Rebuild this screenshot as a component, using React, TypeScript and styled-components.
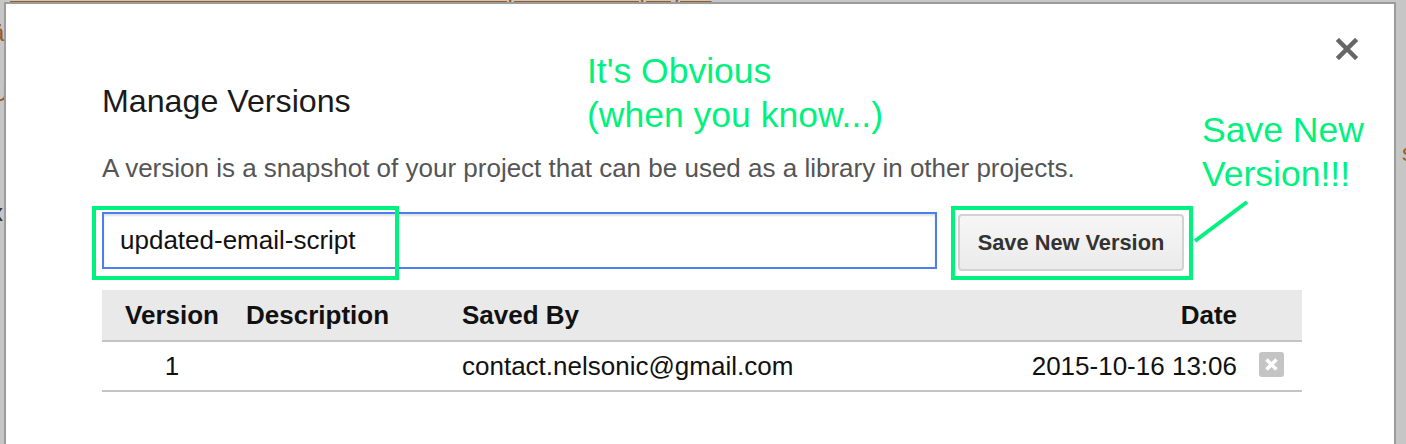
import React from 'react';
import styled, { createGlobalStyle } from 'styled-components';

const GlobalStyle = createGlobalStyle`
  html, body {
    margin: 0;
    padding: 0;
    background: #c6c6c6;
  }
  body {
    font-family: 'Liberation Sans', Arial, sans-serif;
  }
`;

const ANNOTATION = '#00f27e';

const Page = styled.div`
  position: relative;
  width: 1406px;
  height: 444px;
  overflow: hidden;
  background: #c6c6c6;
`;

// the page behind the modal, only slivers of it show at the edges
const Backdrop = styled.div`
  display: flex;
  flex-direction: column;
  font-size: 24px;
  color: #9b5a20;
  white-space: nowrap;
`;

const TopStrip = styled.div`
  height: 3px;
  overflow: hidden;
  padding-left: 10px;
`;

const TopText = styled.div`
  margin-top: -21px;
  line-height: 24px;
  text-decoration: underline;
`;

const EdgeLine = styled.div`
  display: flex;
  justify-content: space-between;
  height: 60px;
  line-height: 60px;
  margin-left: -9px;
  margin-right: -8px;
`;

const EdgeChar = styled.span<{ $dark?: boolean }>`
  color: ${(p) => (p.$dark ? '#333' : '#9b5a20')};
`;

const Dialog = styled.div`
  position: absolute;
  left: 4px;
  top: 2px;
  width: 1392px;
  height: 460px;
  background: #fff;
  border: 2px solid #9c9c9c;
  padding: 81px 0 0 96px;
  box-sizing: border-box;
`;

const Body = styled.div`
  width: 1200px;
  display: flex;
  flex-direction: column;
`;

const CloseButton = styled.button`
  position: absolute;
  left: 1330px;
  top: 34px;
  width: 22px;
  height: 22px;
  padding: 0;
  border: none;
  background: none;
  cursor: pointer;
`;

const Title = styled.h2`
  margin: 0;
  font-size: 32.2px;
  line-height: 32px;
  font-weight: 400;
  color: #1a1a1a;
`;

const Description = styled.p`
  margin: 38px 0 0;
  font-size: 26px;
  line-height: 26px;
  color: #555;
`;

const FormRow = styled.div`
  display: flex;
  align-items: flex-start;
  gap: 21px;
  margin-top: 31px;
`;

const VersionInput = styled.input`
  width: 835px;
  height: 57px;
  box-sizing: border-box;
  border: 2px solid #4b7ff0;
  box-shadow: inset 0 2px 2px rgba(0, 0, 0, 0.12);
  padding: 0 16px;
  font-family: inherit;
  font-size: 26px;
  color: #111;
  outline: none;
`;

const SaveButton = styled.button`
  margin-top: 2px;
  width: 226px;
  height: 57px;
  box-sizing: border-box;
  border: 2px solid #d2d2d2;
  border-radius: 4px;
  background: linear-gradient(#f6f6f6, #ebebeb);
  font-family: inherit;
  font-size: 21.8px;
  font-weight: 700;
  color: #333;
  cursor: pointer;
`;

const Table = styled.table`
  margin-top: 19px;
  width: 1200px;
  table-layout: fixed;
  border-collapse: collapse;
  font-size: 26px;
  color: #111;
`;

const HeadRow = styled.tr`
  height: 51px;
  background: #e9e9e9;
  border-bottom: 2px solid #c4c4c4;
`;

const BodyRow = styled.tr`
  height: 50px;
  border-bottom: 2px solid #c4c4c4;
`;

const Th = styled.th<{ $align?: string }>`
  padding: 0 4px;
  font-weight: 700;
  font-size: 26px;
  text-align: ${(p) => p.$align || 'left'};
  color: #111;
`;

const Td = styled.td<{ $align?: string }>`
  padding: 0 4px;
  text-align: ${(p) => p.$align || 'left'};
  white-space: nowrap;
`;

const DeleteIcon = styled.span`
  display: inline-flex;
  align-items: center;
  justify-content: center;
  width: 25px;
  height: 25px;
  border-radius: 3px;
  background: #c4c4c4;
  vertical-align: middle;
  transform: translateY(-3px);
`;

const Note = styled.div<{ $left: number; $top: number }>`
  position: absolute;
  left: ${(p) => p.$left}px;
  top: ${(p) => p.$top}px;
  font-size: 35.5px;
  line-height: 44px;
  color: ${ANNOTATION};
  white-space: nowrap;
`;

const Highlight = styled.div<{ $left: number; $width: number }>`
  position: absolute;
  left: ${(p) => p.$left}px;
  top: 202px;
  width: ${(p) => p.$width}px;
  height: 74px;
  box-sizing: border-box;
  border: 4px solid ${ANNOTATION};
  pointer-events: none;
`;

const Pointer = styled.svg`
  position: absolute;
  left: 1185px;
  top: 193px;
`;

const edgeRows: { left: string; right?: string; dark?: boolean }[] = [
  { left: 'ä' },
  { left: 'U' },
  { left: 'r', right: 's' },
  { left: 'x', dark: true },
  { left: 'f' },
  { left: '' },
  { left: '' },
];

const App: React.FC = () => {
  return (
    <>
      <GlobalStyle />
      <Page>
        <Backdrop>
          <TopStrip>
            <TopText>e. and click 'Save New Version' to create a snapshot of the project</TopText>
          </TopStrip>
          {edgeRows.map((row, i) => (
            <EdgeLine key={i}>
              <EdgeChar $dark={row.dark}>{row.left}</EdgeChar>
              <EdgeChar>{row.right}</EdgeChar>
            </EdgeLine>
          ))}
        </Backdrop>

        <Dialog>
          <CloseButton aria-label="Close">
            <svg width="22" height="22" viewBox="0 0 22 22">
              <path d="M3 3 L19 19 M19 3 L3 19" stroke="#666" strokeWidth="4.5" strokeLinecap="square" />
            </svg>
          </CloseButton>

          <Body>
            <Title>Manage Versions</Title>
            <Description>
              A version is a snapshot of your project that can be used as a library in other projects.
            </Description>
            <FormRow>
              <VersionInput defaultValue="updated-email-script" />
              <SaveButton>Save New Version</SaveButton>
            </FormRow>
            <Table>
              <colgroup>
                <col style={{ width: 140 }} />
                <col style={{ width: 216 }} />
                <col style={{ width: 533 }} />
                <col style={{ width: 250 }} />
                <col style={{ width: 61 }} />
              </colgroup>
              <thead>
                <HeadRow>
                  <Th $align="center">Version</Th>
                  <Th>Description</Th>
                  <Th>Saved By</Th>
                  <Th $align="right">Date</Th>
                  <Th />
                </HeadRow>
              </thead>
              <tbody>
                <BodyRow>
                  <Td $align="center">1</Td>
                  <Td />
                  <Td>contact.nelsonic@gmail.com</Td>
                  <Td $align="right">2015-10-16 13:06</Td>
                  <Td $align="center">
                    <DeleteIcon>
                      <svg width="15" height="15" viewBox="0 0 15 15">
                        <path d="M2.5 2.5 L12.5 12.5 M12.5 2.5 L2.5 12.5" stroke="#fff" strokeWidth="3.5" />
                      </svg>
                    </DeleteIcon>
                  </Td>
                </BodyRow>
              </tbody>
            </Table>
          </Body>

          <Note $left={581} $top={45}>
            It's Obvious
            <br />
            (when you know...)
          </Note>
          <Note $left={1196} $top={104}>
            Save New
            <br />
            Version!!!
          </Note>
          <Highlight $left={86} $width={307} />
          <Highlight $left={945} $width={242} />
          <Pointer width="64" height="50" viewBox="0 0 64 50">
            <path d="M4 44 L56 5" stroke={ANNOTATION} strokeWidth="4" />
          </Pointer>
        </Dialog>
      </Page>
    </>
  );
};

export default App;
